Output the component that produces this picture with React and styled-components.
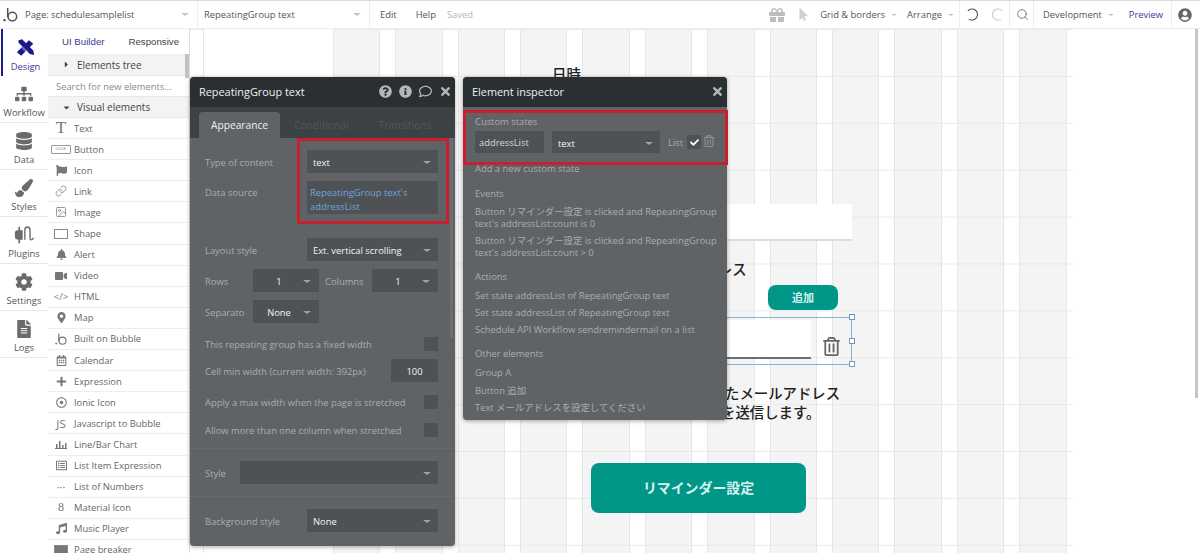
import React from 'react';
import styled, { createGlobalStyle } from 'styled-components';
import {
  FaSitemap, FaDatabase, FaPaintBrush, FaCog, FaFileAlt, FaFlag, FaBell, FaVideo,
  FaMapMarkerAlt, FaMusic, FaQuestionCircle, FaInfoCircle, FaRegComment, FaTimes, FaCheck,
  FaRegTrashAlt, FaGift, FaMousePointer, FaUserCircle, FaCaretRight, FaCaretDown,
  FaRegCalendarAlt, FaPlus, FaRegDotCircle, FaRegListAlt,
} from 'react-icons/fa';
import { Link as LinkIcon, Image as ImageIcon, Search as SearchIcon } from 'lucide-react';

const GlobalStyle = createGlobalStyle`
  html, body { margin: 0; padding: 0; background: #fff; }
  body { font-family: "Open Sans", "Noto Sans CJK JP", sans-serif; font-size: 9.4px; color: #555; }
  * { box-sizing: border-box; }
`;

const Page = styled.div`
  width: 1200px;
  height: 553px;
  overflow: hidden;
  position: relative;
  display: flex;
  flex-direction: column;
`;

/* top bar */
const TopBar = styled.div`
  height: 29px;
  flex: none;
  display: flex;
  align-items: stretch;
  border-top: 1px solid #ddd;
  border-bottom: 1px solid #eee;
  font-size: 9.4px;
  color: #555;
  background: #fff;
`;

const BarCell = styled.div`
  display: flex;
  align-items: center;
  width: ${p => (p.$width ? `${p.$width}px` : 'auto')};
  flex: ${p => (p.$grow ? 1 : 'none')};
  padding: 0 ${p => p.$right || 0}px 0 ${p => p.$left || 0}px;
  gap: ${p => p.$gap || 0}px;
  justify-content: ${p => (p.$between ? 'space-between' : 'flex-start')};
  border-right: ${p => (p.$line ? '1px solid #eee' : 'none')};
`;

const BarText = styled.span`
  color: ${p => p.$color || '#555'};
  white-space: nowrap;
  flex: ${p => (p.$grow ? 1 : 'none')};
  margin-left: ${p => p.$offset || 0}px;
`;

const BarIcon = styled.span`
  display: flex;
  color: ${p => p.$color || '#666'};
  font-size: ${p => p.$size || 12}px;
  margin-right: ${p => p.$after || 0}px;
`;

const Caret = styled.i`
  display: inline-block;
  width: 0;
  height: 0;
  flex: none;
  border-left: ${p => p.$size || 4}px solid transparent;
  border-right: ${p => p.$size || 4}px solid transparent;
  border-top: ${p => (p.$size || 4) - 0.5}px solid ${p => p.$color || '#c4c4c4'};
`;

/* main area */
const Main = styled.div`
  flex: 1;
  display: flex;
  min-height: 0;
`;

const Sidebar = styled.nav`
  width: 48px;
  flex: none;
  display: flex;
  flex-direction: column;
`;

const SideTab = styled.div`
  height: 47px;
  flex: none;
  display: flex;
  flex-direction: column;
  align-items: center;
  justify-content: flex-end;
  gap: 3px;
  padding-bottom: 2px;
  border-bottom: ${p => (p.$active ? 'none' : '1px solid #e6e6e6')};
  border-left: ${p => (p.$active ? '2px solid #1b1b85' : '0')};
  margin-left: ${p => (p.$active ? 1 : 0)}px;
  color: ${p => (p.$active ? '#1b1b85' : '#6b6b6b')};
  font-size: 18px;
`;

const SideLabel = styled.span`
  font-size: 9.4px;
  line-height: 14px;
  color: ${p => (p.$active ? '#3a3a98' : '#555')};
`;

const Palette = styled.div`
  width: 142px;
  flex: none;
  position: relative;
  border-right: 1px solid #ddd;
  overflow: hidden;
  background: #fff;
`;

const PaletteThumb = styled.div`
  position: absolute;
  right: 0;
  top: 25px;
  width: 4px;
  height: 24px;
  background: #c2c2c2;
`;

const PaletteTabs = styled.div`
  height: 25px;
  display: flex;
`;

const PaletteTab = styled.div`
  width: ${p => p.$width}px;
  display: flex;
  align-items: center;
  justify-content: center;
  font-family: "Liberation Sans", sans-serif;
  font-size: 9.7px;
  color: ${p => (p.$active ? '#3a3a98' : '#444')};
`;

const TreeHead = styled.div`
  height: ${p => p.$height}px;
  display: flex;
  align-items: center;
  gap: 6px;
  padding-left: 14px;
  background: #f3f3f3;
  border-bottom: 1px solid #e8e8e8;
  font-size: 10px;
  color: #444;
`;

const SearchRow = styled.div`
  height: 21px;
  display: flex;
  align-items: center;
  padding-left: 8px;
  font-size: 9.4px;
  color: #8a8a8a;
  border-bottom: 1px solid #e8e8e8;
`;

const PaletteItem = styled.div`
  height: 21.1px;
  display: flex;
  align-items: center;
  border-bottom: 1px solid #eee;
  color: #666;
  font-size: 9.4px;
`;

const ItemIcon = styled.span`
  width: 26px;
  flex: none;
  display: flex;
  align-items: center;
  justify-content: center;
  color: #777;
  font-size: ${p => p.$size || 11}px;
  font-family: ${p => (p.$serif ? '"Liberation Serif", serif' : 'inherit')};
`;

const ClickBox = styled.span`
  width: 20px;
  height: 9px;
  border: 1px solid #999;
  border-radius: 1px;
  font-family: "Liberation Sans", sans-serif;
  font-size: 3.5px;
  line-height: 7px;
  text-align: center;
  color: #777;
`;

const ShapeBox = styled.span`
  width: 14px;
  height: 10px;
  border: 1px solid #888;
  background: ${p => (p.$filled ? '#777' : 'transparent')};
`;

/* canvas */
const Canvas = styled.div`
  width: 883px;
  flex: none;
  position: relative;
  background-color: #fff;
  background-image:
    linear-gradient(to bottom, transparent 45.9px, #e9e9e9 45.9px),
    repeating-linear-gradient(90deg, #fff 0 15px, #e6e6e6 15px 16px, #f4f4f4 16px 61.4px, #e6e6e6 61.4px 62.4px);
  background-size: 100% 46.9px, 874px 100%;
  background-position: 0 1px, 3px 0;
  background-repeat: repeat, no-repeat;
`;

const PageColumn = styled.div`
  position: absolute;
  left: 13px;
  top: 0;
  bottom: 0;
  width: 130px;
  background: #fff;
  border-left: 1px solid #e6e6e6;
`;

const CanvasText = styled.div`
  position: absolute;
  left: ${p => p.$x}px;
  top: ${p => p.$y}px;
  font-family: "Noto Sans CJK JP", sans-serif;
  font-size: 14.4px;
  font-weight: 500;
  line-height: 20px;
  color: #222;
  white-space: nowrap;
`;

const NameInput = styled.div`
  position: absolute;
  left: 350px;
  top: 175px;
  width: 312px;
  height: 37px;
  background: #fff;
  border-bottom: 2px solid #ddd;
`;

const AddButton = styled.div`
  position: absolute;
  left: 578px;
  top: 256px;
  width: 70px;
  height: 25px;
  padding-bottom: 2px;
  border-radius: 8px;
  background: #009688;
  color: #d8f3ef;
  font-family: "Noto Sans CJK JP", sans-serif;
  font-size: 11px;
  font-weight: 700;
  display: flex;
  align-items: center;
  justify-content: center;
`;

const SelectedGroup = styled.div`
  position: absolute;
  left: 350px;
  top: 288px;
  width: 312px;
  height: 48px;
  border: 1.5px solid #8fb0cf;
  display: flex;
  align-items: flex-start;
  padding-top: 2px;
`;

const GroupInput = styled.div`
  width: 270px;
  flex: none;
  height: 39px;
  background: #fff;
  border-bottom: 2px solid #6e6e6e;
`;

const GroupTrash = styled.span`
  margin: 17px 0 0 11px;
  color: #666;
  font-size: 19px;
  line-height: 1;
`;

const Handle = styled.span`
  position: absolute;
  right: -4px;
  top: ${p => p.$top}px;
  width: 6px;
  height: 6px;
  background: #fff;
  border: 1px solid #6f98c0;
`;

const BigButton = styled.div`
  position: absolute;
  left: 401px;
  top: 434px;
  width: 215px;
  height: 50px;
  padding-bottom: 3px;
  border-radius: 8px;
  background: #009688;
  color: #d8f3ef;
  font-family: "Noto Sans CJK JP", sans-serif;
  font-size: 13.9px;
  font-weight: 700;
  display: flex;
  align-items: center;
  justify-content: center;
`;

const PageScroll = styled.div`
  position: absolute;
  left: 1195px;
  top: 29px;
  width: 3px;
  height: 369px;
  background: #c6c6c6;
`;

/* floating panels */
const FloatPanel = styled.section`
  position: absolute;
  left: ${p => p.$x}px;
  top: 77px;
  width: ${p => p.$width}px;
  height: ${p => p.$height}px;
  background: #5f6366;
  border-radius: 4px;
  box-shadow: 0 1px 4px rgba(0, 0, 0, 0.35);
  color: #a9adaf;
  font-size: 9.4px;
  overflow: hidden;
`;

const PanelHead = styled.header`
  height: 30px;
  display: flex;
  align-items: center;
  padding: 0 3px 1px 9px;
  background: #2a2f31;
  color: #f0f0f0;
  font-size: 10.9px;
`;

const PanelTitle = styled.span`
  flex: 1;
`;

const HeadIcons = styled.div`
  display: flex;
  align-items: center;
  gap: 7px;
  color: #b4b7b8;
  font-size: 13px;
`;

const TabBar = styled.div`
  height: 31px;
  display: flex;
  align-items: flex-end;
  padding-left: 9px;
  background: #3c4144;
`;

const PanelTab = styled.div`
  width: ${p => p.$width}px;
  height: 26px;
  display: flex;
  align-items: center;
  justify-content: center;
  border-radius: 4px 4px 0 0;
  background: ${p => (p.$active ? '#5f6366' : 'transparent')};
  color: ${p => (p.$active ? '#f0f0f0' : '#53585b')};
  font-size: 10.2px;
`;

const EditorBody = styled.div`
  position: relative;
  padding: 12px 17px 0 15px;
`;

const FieldRow = styled.div`
  display: flex;
  align-items: ${p => (p.$top ? 'flex-start' : 'center')};
  justify-content: ${p => (p.$start ? 'flex-start' : 'space-between')};
  margin-top: ${p => p.$gap || 0}px;
`;

const FieldLabel = styled.span`
  width: ${p => (p.$width ? `${p.$width}px` : 'auto')};
  flex: none;
  padding-top: ${p => p.$pad || 1}px;
  padding-left: ${p => p.$indent || 0}px;
  white-space: nowrap;
`;

const Select = styled.div`
  width: ${p => p.$width}px;
  height: 23px;
  flex: none;
  display: flex;
  align-items: center;
  justify-content: ${p => (p.$center ? 'center' : 'space-between')};
  position: relative;
  padding: 2px ${p => (p.$center ? 14 : 7)}px 0 ${p => (p.$center ? 0 : 6)}px;
  background: #4e5255;
  color: #f2f2f2;
  font-size: 9.4px;
`;

const SelectCaret = styled(Caret)`
  position: absolute;
  right: 8px;
`;

const SourceBox = styled.div`
  width: 131px;
  height: 33px;
  flex: none;
  padding: 5px 3px;
  background: #4e5255;
  color: #6ea4dc;
  font-size: 9.4px;
  line-height: 14px;
`;

const Checkbox = styled.span`
  width: 14px;
  height: 14px;
  flex: none;
  display: flex;
  align-items: center;
  justify-content: center;
  margin-left: ${p => p.$offset || 0}px;
  background: #4e5255;
  color: #fff;
  font-size: 9px;
`;

const NumberBox = styled.div`
  width: 47px;
  height: 23px;
  flex: none;
  display: flex;
  align-items: center;
  justify-content: center;
  padding-top: 1px;
  background: #4e5255;
  color: #f2f2f2;
  font-size: 9.4px;
`;

const Rule = styled.hr`
  margin: ${p => p.$gap}px -15px 0;
  border: 0;
  border-top: 1px solid #666a6d;
`;

const PanelThumb = styled.div`
  position: absolute;
  right: 2px;
  top: 0;
  width: 3px;
  height: 200px;
  background: #6a6e71;
`;

const RedFrame = styled.div`
  position: absolute;
  left: ${p => p.$x}px;
  top: ${p => p.$y}px;
  width: ${p => p.$width}px;
  height: ${p => p.$height}px;
  border: 3px solid #c9202f;
`;

const InspectorBody = styled.div`
  position: relative;
  padding: 0 8px 0 12px;
`;

const InspectorLine = styled.div`
  margin-top: ${p => p.$gap || 0}px;
  line-height: ${p => p.$height || 14}px;
  white-space: ${p => (p.$wrap ? 'normal' : 'nowrap')};
`;

const StateRow = styled.div`
  display: flex;
  align-items: center;
  margin-top: 2px;
`;

const StateName = styled.div`
  width: 69px;
  height: 22px;
  flex: none;
  display: flex;
  align-items: center;
  padding: 1px 0 0 4px;
  background: #4e5255;
  color: #d6d8d9;
`;

const StateType = styled(Select)`
  height: 22px;
  margin: 0 8px;
`;

const StateTrash = styled.span`
  margin-left: 2px;
  color: #8c9092;
  font-size: 12px;
  line-height: 1;
`;

const Svg = styled.svg`
  display: block;
  flex: none;
`;

const BubbleLogo = ({ size = 15, color = '#555' }) => (
  <Svg width={size} height={size} viewBox="0 0 16 16">
    <circle cx="1.6" cy="14" r="1.3" fill={color} />
    <path d="M5 1v10" stroke={color} strokeWidth="1.6" fill="none" />
    <circle cx="10" cy="10.2" r="4.6" stroke={color} strokeWidth="1.6" fill="none" />
  </Svg>
);

const DesignIcon = () => (
  <Svg width="19" height="18" viewBox="0 0 22 20" fill="#1b1b85">
    <path d="M3 1l4-1 13 13 1 5-5-1L3 4z" />
    <path d="M15 1l5 4-14 14-5-4z" />
    <path d="M8 8l6 6-2 2-6-6z" fill="#fff" opacity="0.35" />
  </Svg>
);

const PlugIcon = () => (
  <Svg width="20" height="19" viewBox="0 0 23 22" fill="#6b6b6b">
    <path d="M1 9c0-2 1-3 3-3h6v11H7v4H5v-4c-2 0-4-1-4-3zM5 2h2v4H5z" />
    <path d="M12.5 17V6c0-5 6-5 6 0v9c0 3 2 3 4 0" fill="none" stroke="#6b6b6b" strokeWidth="1.6" />
  </Svg>
);

const ChartIcon = () => (
  <Svg width="12" height="9" viewBox="0 0 12 9" fill="#777">
    <path d="M0 8h12v1H0zM1 4h1.5v4H1zM4 1h1.5v7H4zM7 5h1.5v3H7zM10 3h1.5v5H10z" />
  </Svg>
);

const ITEMS = [
  ['Text', <ItemIcon $serif $size={17}>T</ItemIcon>],
  ['Button', <ItemIcon><ClickBox>CLICK</ClickBox></ItemIcon>],
  ['Icon', <ItemIcon><FaFlag /></ItemIcon>],
  ['Link', <ItemIcon><LinkIcon size={12} strokeWidth={1.5} /></ItemIcon>],
  ['Image', <ItemIcon><ImageIcon size={12} strokeWidth={1.5} /></ItemIcon>],
  ['Shape', <ItemIcon><ShapeBox /></ItemIcon>],
  ['Alert', <ItemIcon><FaBell /></ItemIcon>],
  ['Video', <ItemIcon $size={12}><FaVideo /></ItemIcon>],
  ['HTML', <ItemIcon $size={9.5}>&lt;/&gt;</ItemIcon>],
  ['Map', <ItemIcon><FaMapMarkerAlt /></ItemIcon>],
  ['Built on Bubble', <ItemIcon><BubbleLogo size={12} color="#777" /></ItemIcon>],
  ['Calendar', <ItemIcon><FaRegCalendarAlt /></ItemIcon>],
  ['Expression', <ItemIcon><FaPlus /></ItemIcon>],
  ['Ionic Icon', <ItemIcon><FaRegDotCircle /></ItemIcon>],
  ['Javascript to Bubble', <ItemIcon $size={11.5}>JS</ItemIcon>],
  ['Line/Bar Chart', <ItemIcon><ChartIcon /></ItemIcon>],
  ['List Item Expression', <ItemIcon><FaRegListAlt /></ItemIcon>],
  ['List of Numbers', <ItemIcon>···</ItemIcon>],
  ['Material Icon', <ItemIcon $serif $size={12}>8</ItemIcon>],
  ['Music Player', <ItemIcon><FaMusic /></ItemIcon>],
  ['Page breaker', <ItemIcon><ShapeBox $filled /></ItemIcon>],
];

const TABS = [
  ['Design', <DesignIcon />, true],
  ['Workflow', <FaSitemap />],
  ['Data', <FaDatabase />],
  ['Styles', <FaPaintBrush />],
  ['Plugins', <PlugIcon />],
  ['Settings', <FaCog />],
  ['Logs', <FaFileAlt />],
];

const PANEL_CARET = '#a0a3a5';

const PropertyEditor = () => (
  <FloatPanel $x={190} $width={265} $height={469}>
    <PanelHead>
      <PanelTitle>RepeatingGroup text</PanelTitle>
      <HeadIcons>
        <FaQuestionCircle />
        <FaInfoCircle />
        <FaRegComment />
        <FaTimes />
      </HeadIcons>
    </PanelHead>
    <TabBar>
      <PanelTab $active $width={81}>Appearance</PanelTab>
      <PanelTab $width={83}>Conditional</PanelTab>
      <PanelTab $width={84}>Transitions</PanelTab>
    </TabBar>
    <EditorBody>
      <PanelThumb />
      <FieldRow>
        <FieldLabel>Type of content</FieldLabel>
        <Select $width={131}>text<Caret $color={PANEL_CARET} /></Select>
      </FieldRow>
      <FieldRow $top $gap={8}>
        <FieldLabel $pad={5}>Data source</FieldLabel>
        <SourceBox>RepeatingGroup text's addressList</SourceBox>
      </FieldRow>
      <FieldRow $gap={24}>
        <FieldLabel>Layout style</FieldLabel>
        <Select $width={131}>Ext. vertical scrolling<Caret $color={PANEL_CARET} /></Select>
      </FieldRow>
      <FieldRow $gap={8} $start>
        <FieldLabel $width={48}>Rows</FieldLabel>
        <Select $width={66} $center>1<SelectCaret $color={PANEL_CARET} /></Select>
        <FieldLabel $width={53} $indent={6}>Columns</FieldLabel>
        <Select $width={66} $center>1<SelectCaret $color={PANEL_CARET} /></Select>
      </FieldRow>
      <FieldRow $gap={8} $start>
        <FieldLabel $width={48}>Separato</FieldLabel>
        <Select $width={66} $center>None<SelectCaret $color={PANEL_CARET} /></Select>
      </FieldRow>
      <FieldRow $gap={14}>
        <FieldLabel>This repeating group has a fixed width</FieldLabel>
        <Checkbox />
      </FieldRow>
      <FieldRow $gap={8}>
        <FieldLabel>Cell min width (current width: 392px)</FieldLabel>
        <NumberBox>100</NumberBox>
      </FieldRow>
      <FieldRow $gap={13}>
        <FieldLabel>Apply a max width when the page is stretched</FieldLabel>
        <Checkbox />
      </FieldRow>
      <FieldRow $gap={14}>
        <FieldLabel>Allow more than one column when stretched</FieldLabel>
        <Checkbox />
      </FieldRow>
      <Rule $gap={11} />
      <FieldRow $gap={12}>
        <FieldLabel>Style</FieldLabel>
        <Select $width={198}><span /><Caret $color={PANEL_CARET} /></Select>
      </FieldRow>
      <Rule $gap={12} />
      <FieldRow $gap={12}>
        <FieldLabel>Background style</FieldLabel>
        <Select $width={131}>None<Caret $color={PANEL_CARET} /></Select>
      </FieldRow>
    </EditorBody>
  </FloatPanel>
);

const Inspector = () => (
  <FloatPanel $x={463} $width={264} $height={343}>
    <PanelHead>
      <PanelTitle>Element inspector</PanelTitle>
      <HeadIcons><FaTimes /></HeadIcons>
    </PanelHead>
    <InspectorBody>
      <InspectorLine $gap={8}>Custom states</InspectorLine>
      <StateRow>
        <StateName>addressList</StateName>
        <StateType $width={108}>text<Caret $color={PANEL_CARET} /></StateType>
        <span>List</span>
        <Checkbox $offset={4}><FaCheck /></Checkbox>
        <StateTrash><FaRegTrashAlt /></StateTrash>
      </StateRow>
      <InspectorLine $gap={9}>Add a new custom state</InspectorLine>
      <InspectorLine $gap={11}>Events</InspectorLine>
      <InspectorLine $gap={5} $height={12} $wrap>Button リマインダー設定 is clicked and RepeatingGroup text's addressList:count is 0</InspectorLine>
      <InspectorLine $gap={5} $height={12} $wrap>Button リマインダー設定 is clicked and RepeatingGroup text's addressList:count &gt; 0</InspectorLine>
      <InspectorLine $gap={11}>Actions</InspectorLine>
      <InspectorLine $gap={5}>Set state addressList of RepeatingGroup text</InspectorLine>
      <InspectorLine $gap={3}>Set state addressList of RepeatingGroup text</InspectorLine>
      <InspectorLine $gap={3}>Schedule API Workflow sendremindermail on a list</InspectorLine>
      <InspectorLine $gap={10}>Other elements</InspectorLine>
      <InspectorLine $gap={5}>Group A</InspectorLine>
      <InspectorLine $gap={4}>Button 追加</InspectorLine>
      <InspectorLine $gap={3}>Text メールアドレスを設定してください</InspectorLine>
    </InspectorBody>
  </FloatPanel>
);

export default function App() {
  return (
    <Page>
      <GlobalStyle />
      <TopBar>
        <BarCell $width={198} $left={3} $right={8} $between $line>
          <BubbleLogo />
          <BarText $grow $offset={7}>Page: schedulesamplelist</BarText>
          <Caret />
        </BarCell>
        <BarCell $width={172} $left={6} $right={8} $between $line>
          <BarText>RepeatingGroup text</BarText>
          <Caret />
        </BarCell>
        <BarCell $grow $left={10} $gap={19}>
          <BarText>Edit</BarText>
          <BarText>Help</BarText>
          <BarText $color="#b5b5b5" $offset={-8}>Saved</BarText>
        </BarCell>
        <BarCell $right={5} $gap={6} $line>
          <BarIcon $color="#bdbdbd" $size={16} $after={6}><FaGift /></BarIcon>
          <BarIcon $color="#cfcfcf" $size={13} $after={4}><FaMousePointer /></BarIcon>
          <BarText>Grid &amp; borders</BarText>
          <Caret $size={3} />
          <BarText $offset={4}>Arrange</BarText>
          <Caret $size={3} />
        </BarCell>
        <BarCell $width={50} $left={6} $gap={12} $line>
          <Svg width="13" height="13" viewBox="0 0 14 14" fill="none" stroke="#555" strokeWidth="1.2">
            <path d="M2 3a6 6 0 1 1 1 9" />
          </Svg>
          <Svg width="13" height="13" viewBox="0 0 14 14" fill="none" stroke="#ccc" strokeWidth="1.2">
            <path d="M12 3a6 6 0 1 0-1 9" />
          </Svg>
        </BarCell>
        <BarCell $width={24} $left={6} $line>
          <BarIcon><SearchIcon size={13} strokeWidth={1.5} /></BarIcon>
        </BarCell>
        <BarCell $width={138} $left={9} $gap={6} $line>
          <BarText>Development</BarText>
          <Caret $size={3} />
          <BarText $color="#3a3a98" $offset={9}>Preview</BarText>
        </BarCell>
        <BarCell $width={28} $left={6}>
          <BarIcon $size={14}><FaUserCircle /></BarIcon>
        </BarCell>
      </TopBar>
      <Main>
        <Sidebar>
          {TABS.map(([label, icon, active]) => (
            <SideTab key={label} $active={active}>
              {icon}
              <SideLabel $active={active}>{label}</SideLabel>
            </SideTab>
          ))}
        </Sidebar>
        <Palette>
          <PaletteThumb />
          <PaletteTabs>
            <PaletteTab $active $width={72}>UI Builder</PaletteTab>
            <PaletteTab $width={72}>Responsive</PaletteTab>
          </PaletteTabs>
          <TreeHead $height={22}><FaCaretRight size={9} />Elements tree</TreeHead>
          <SearchRow>Search for new elements...</SearchRow>
          <TreeHead $height={21}><FaCaretDown size={9} />Visual elements</TreeHead>
          {ITEMS.map(([label, icon]) => (
            <PaletteItem key={label}>{icon}{label}</PaletteItem>
          ))}
        </Palette>
        <Canvas>
          <PageColumn />
          <CanvasText $x={362} $y={35}>日時</CanvasText>
          <NameInput />
          <CanvasText $x={456} $y={230}>メールアドレス</CanvasText>
          <AddButton>追加</AddButton>
          <SelectedGroup>
            <GroupInput />
            <GroupTrash><FaRegTrashAlt /></GroupTrash>
            <Handle $top={-4} />
            <Handle $top={20} />
            <Handle $top={43} />
          </SelectedGroup>
          <CanvasText $x={535} $y={354}>たメールアドレス</CanvasText>
          <CanvasText $x={531} $y={373}>を送信します。</CanvasText>
          <BigButton>リマインダー設定</BigButton>
        </Canvas>
      </Main>
      <PageScroll />
      <PropertyEditor />
      <Inspector />
      <RedFrame $x={297} $y={138} $width={152} $height={86} />
      <RedFrame $x={463} $y={110} $width={265} $height={55} />
    </Page>
  );
}
